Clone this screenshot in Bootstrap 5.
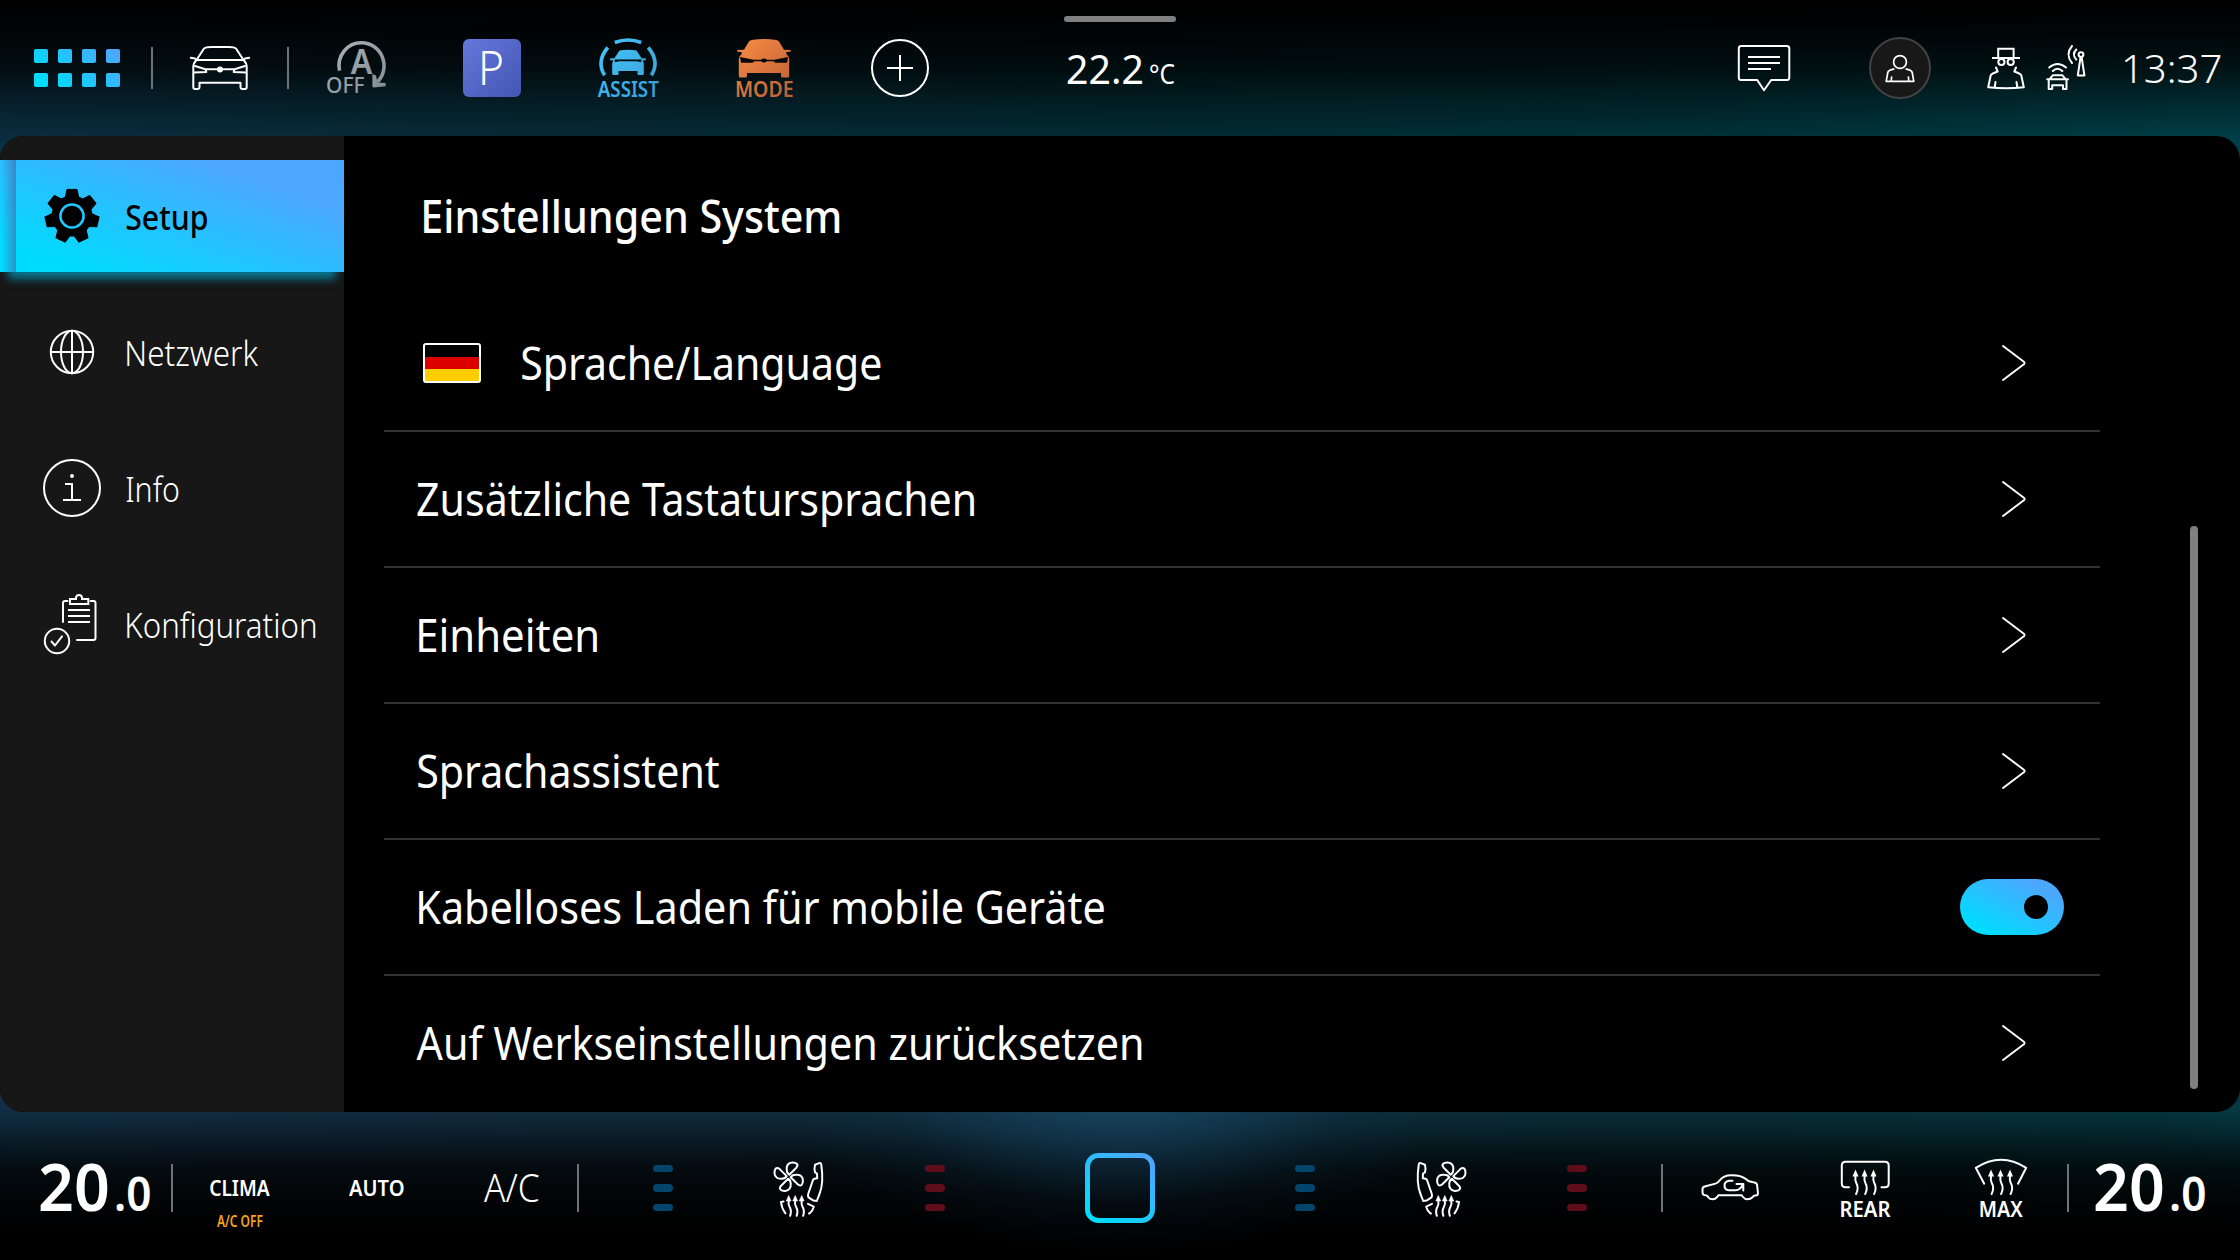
<!DOCTYPE html>
<html lang="de">
<head>
<meta charset="utf-8">
<meta name="viewport" content="width=device-width, initial-scale=1">
<title>Einstellungen System</title>
<link href="https://cdn.jsdelivr.net/npm/bootstrap@5.3.0/dist/css/bootstrap.min.css" rel="stylesheet">
<style>
  :root { --cyan: #00dcff; --sky: #4ca7ff; --line: #333; --bar-line: #6f7375; }
  body {
    width: 2240px; height: 1260px; overflow: hidden; color: #fff;
    font-family: "Noto Sans", "Open Sans", sans-serif; font-variant-ligatures: none;
    background-color: #000;
    background-repeat: no-repeat;
    background-image:
      linear-gradient(180deg, #000 0, rgba(0,0,0,.93) 30px, rgba(0,0,0,.74) 68px, rgba(0,0,0,.42) 100px, rgba(0,0,0,.12) 136px, transparent 160px),
      linear-gradient(90deg, #0b3347 0, #072f3c 560px, #023139 1200px, #00373f 1700px, #01454f 2240px),
      radial-gradient(ellipse 330px 165px at 1120px 8px, rgba(30,88,122,.6) 0, rgba(26,78,112,.42) 35%, rgba(20,60,90,.15) 70%, transparent 100%),
      linear-gradient(180deg, transparent 0, rgba(0,0,0,.1) 32px, rgba(0,0,0,.3) 50px, rgba(0,0,0,.55) 68px, rgba(0,0,0,.78) 90px, rgba(0,0,0,.91) 115px, #000 150px),
      linear-gradient(90deg, #13324a 0, #132f42 560px, #0f3040 1200px, #0a313c 1700px, #063842 2160px, #073d49 2240px);
    background-size: 100% 170px, 100% 170px, 100% 180px, 100% 180px, 100% 180px;
    background-position: 0 0, 0 0, 0 1080px, 0 1080px, 0 1080px;
  }
  .fit { display: inline-block; white-space: pre; transform-origin: 0 50%; line-height: 1.2; }
  svg { display: block; overflow: visible; flex: none; }
  .ln { fill: none; stroke: #fff; stroke-width: 2; stroke-linecap: round; stroke-linejoin: round; }
  .topbar { height: 136px; }
  .slot { width: 136px; height: 100%; display: flex; align-items: center; justify-content: center; flex: none; }
  .slot-apps { width: 152px; justify-content: flex-start; padding-left: 34px; }
  .divider { width: 2px; margin: 0 -1px; background: var(--bar-line); flex: none; }
  .topbar .divider { height: 42px; }
  .handle { width: 112px; height: 6px; border-radius: 3px; background: #808080; top: 16px; left: 1064px; }
  .outside { margin-left: 99px; padding-top: 2px; }
  .t-out { font-size: 40px; } .t-unit { font-size: 28px; margin-left: 8px; }
  .t-clock { font-size: 39px; font-weight: 300; margin: 0 19px 0 20px; padding-top: 1px; }

  .panel { height: 976px; border-radius: 24px; background: #000; }
  .side { width: 344px; background: #171717; padding-top: 24px; flex: none; }
  .side-item { height: 112px; margin-bottom: 24px; padding-left: 40px; font-size: 35px; font-weight: 300; color: #fff; background: none; }
  .side-item .fit { margin-left: 22px; padding-top: 1px; }
  .side-item.current { color: #000; font-weight: 500; background: linear-gradient(19deg, var(--cyan) 12%, var(--sky) 78%); box-shadow: 0 15px 8px -8px rgba(0,180,225,.6); position: relative; }
  .side-item.current::before { content: ""; position: absolute; left: 0; top: 0; width: 16px; height: 100%; background: linear-gradient(90deg, transparent 10%, rgba(70,100,165,.62)); }
  .heading { height: 160px; padding: 0 0 1px 78.5px; font-size: 45px; font-weight: 500; }
  .rows { width: 1716px; margin-left: 40px; }
  .entry { height: 136px; padding: 0 36px 0 33px; font-size: 45px; color: #fff; background: none; border: 0; border-bottom: 2px solid var(--line); border-radius: 0; }
  .entry:last-child { border-bottom-color: transparent; }
  .entry .fit { padding-bottom: 1px; }
  .flag { width: 58px; height: 40px; margin: 0 41px 0 6px; border: 2px solid #fff; border-radius: 3px; background: linear-gradient(#000 33.3%, #d00 33.3% 66.6%, #ffce00 66.6%); }
  .arrow-box { width: 104px; }
  .toggle { width: 104px; height: 56px; border-radius: 28px; padding-right: 16px; background: linear-gradient(27deg, var(--cyan) 15%, var(--sky) 82%); }
  .knob { width: 24px; height: 24px; border-radius: 50%; background: #000; }
  .scroll-thumb { width: 8px; height: 563px; margin: 390px 0 0 90px; border-radius: 4px; background: #808080; }

  .climate { height: 148px; padding-top: 4px; }
  .climate .divider { height: 48px; }
  .temp { width: 172px; padding-bottom: 2px; font-size: 64.5px; font-weight: 600; }
  .temp small { font-size: 46.5px; font-weight: 600; margin-left: 7px; }
  .lbl { font-size: 22.4px; font-weight: 600; line-height: 24px; }
  .lbl-ac { font-size: 38px; font-weight: 300; padding-bottom: 1px; }
  .lbl-off { font-size: 16.4px; font-weight: 600; line-height: 20px; color: #f6a31c; margin-top: 11px; }
  .seat-group { width: 408px; }
  .level { width: 20px; height: 7.5px; border-radius: 4px; background: #04456c; }
  .level + .level { margin-top: 12px; }
  .warm .level { background: #5f0c1b; }
</style>
<script src="https://cdn.jsdelivr.net/npm/bootstrap@5.3.0/dist/js/bootstrap.bundle.min.js"></script>
</head>
<body>
<svg width="0" height="0" class="position-absolute">
  <defs>
    <linearGradient id="gApps" gradientUnits="userSpaceOnUse" x1="20" y1="40" x2="66" y2="-12"><stop offset="0" stop-color="#00dcff"/><stop offset="1" stop-color="#4ca7ff"/></linearGradient>
    <linearGradient id="gPark" x1="0" y1="0" x2="1" y2="1"><stop offset="0" stop-color="#6778dc"/><stop offset="1" stop-color="#4155b2"/></linearGradient>
    <linearGradient id="gAssist" gradientUnits="userSpaceOnUse" x1="10" y1="10" x2="62" y2="62"><stop offset="0" stop-color="#46c4fa"/><stop offset="1" stop-color="#3a9fd6"/></linearGradient>
    <linearGradient id="gMode" gradientUnits="userSpaceOnUse" x1="14" y1="8" x2="62" y2="60"><stop offset="0" stop-color="#f58a42"/><stop offset="1" stop-color="#bf6038"/></linearGradient>
    <linearGradient id="gStop" gradientUnits="userSpaceOnUse" x1="10" y1="10" x2="62" y2="62"><stop offset="0" stop-color="#a9b3ba"/><stop offset="1" stop-color="#858d94"/></linearGradient>
    <linearGradient id="gHome" x1="0.15" y1="1" x2="0.85" y2="0"><stop offset="0" stop-color="#00dcff"/><stop offset="1" stop-color="#4ca7ff"/></linearGradient>
    <g id="heat"><path d="M0 0 L3 7 H-3 Z" fill="#fff" stroke="none"/><path class="ln" d="M0 6 C-.6 10 -.4 11 .8 13.500 C3 17.500 3 20 .6 24.500"/></g>
    <g id="heatS"><path d="M0 0 L2.400 5.500 H-2.400 Z" fill="#fff" stroke="#fff" stroke-width=".6"/><path class="ln" d="M0 5 C-.8 9 0 10 1.200 12 C2.800 15 2.600 17 1.400 20.300"/></g>
    <path id="petal" class="ln" d="M.6 -2 L7.600 -9 C10.500 -12.500 7.500 -14.300 3.500 -14.200 C-1 -14 -2.300 -10.500 -2 -7 C-1.900 -4.500 -1 -3 .6 -2 Z"/>
    <g id="seat">
      <g transform="translate(25.700 24.700)"><use href="#petal"/><use href="#petal" transform="rotate(90)"/><use href="#petal" transform="rotate(180)"/><use href="#petal" transform="rotate(270)"/></g>
      <path class="ln" d="M52 12.700 L57 10.900 Q58.200 11 58.300 13 Q61 31 56.500 42 L53.800 49 L50.500 48.600 L45.500 45.400 Q44.600 44 45.200 42 L50 28 Q50.500 26.500 54.200 26.200 L54 21.500 L52 20.300 Q51 17 52 12.700 Z"/>
      <use href="#heatS" x="25.700" y="43.500"/><use href="#heatS" x="32.200" y="43.500"/><use href="#heatS" x="38.700" y="43.500"/>
      <path class="ln" d="M20.500 49.500 L18 50 Q18.500 56 22.500 61.500 M45 51.800 L50.800 54.600 Q50 58.500 46.500 61.500 H46"/>
    </g>
  </defs>
</svg>

<header class="topbar d-flex align-items-center position-relative">
  <div class="handle position-absolute"></div>
  <div class="slot slot-apps">
    <svg width="86" height="38">
      <g fill="url(#gApps)"><path d="M1.800 0H12.200A1.800 1.800 0 0 1 14 1.800V12.200A1.800 1.800 0 0 1 12.200 14H1.800A1.800 1.800 0 0 1 0 12.200V1.800A1.800 1.800 0 0 1 1.800 0Z
        m24 0h10.400a1.800 1.800 0 0 1 1.800 1.800v10.400a1.800 1.800 0 0 1 -1.800 1.800h-10.400a1.800 1.800 0 0 1 -1.800 -1.800v-10.400a1.800 1.800 0 0 1 1.800 -1.800Z
        m24 0h10.400a1.800 1.800 0 0 1 1.800 1.800v10.400a1.800 1.800 0 0 1 -1.800 1.800h-10.400a1.800 1.800 0 0 1 -1.800 -1.800v-10.400a1.800 1.800 0 0 1 1.800 -1.800Z
        m24 0h10.400a1.800 1.800 0 0 1 1.800 1.800v10.400a1.800 1.800 0 0 1 -1.800 1.800h-10.400a1.800 1.800 0 0 1 -1.800 -1.800v-10.400a1.800 1.800 0 0 1 1.800 -1.800Z
        m-72 24h10.400a1.800 1.800 0 0 1 1.800 1.800v10.400a1.800 1.800 0 0 1 -1.800 1.800h-10.400a1.800 1.800 0 0 1 -1.800 -1.800v-10.400a1.800 1.800 0 0 1 1.800 -1.800Z
        m24 0h10.400a1.800 1.800 0 0 1 1.800 1.800v10.400a1.800 1.800 0 0 1 -1.800 1.800h-10.400a1.800 1.800 0 0 1 -1.800 -1.800v-10.400a1.800 1.800 0 0 1 1.800 -1.800Z
        m24 0h10.400a1.800 1.800 0 0 1 1.800 1.800v10.400a1.800 1.800 0 0 1 -1.800 1.800h-10.400a1.800 1.800 0 0 1 -1.800 -1.800v-10.400a1.800 1.800 0 0 1 1.800 -1.800Z
        m24 0h10.400a1.800 1.800 0 0 1 1.800 1.800v10.400a1.800 1.800 0 0 1 -1.800 1.800h-10.400a1.800 1.800 0 0 1 -1.800 -1.800v-10.400a1.800 1.800 0 0 1 1.800 -1.800Z"/></g>
    </svg>
  </div>
  <div class="divider"></div>
  <div class="slot">
    <svg width="72" height="72" class="ln">
      <path d="M12.500 28 L20 16.500 Q21.200 14.900 28 14.900 H44 Q50.800 14.900 52 16.500 L59.500 28 Z"/>
      <path d="M12.500 28 Q9.300 31 9.300 35 V55 Q9.300 57 11 57 H13.500 Q15.500 57 15.500 55 V50.800 H56.500 V55 Q56.500 57 58.500 57 H61 Q62.700 57 62.700 55 V35 Q62.700 31 59.500 28"/>
      <path d="M12 28 L11 26.400 L6.800 25.800 M60 28 L61 26.400 L65.200 25.800 M11 34 L21.500 37.200 H50.500 L61 34 M21.500 37.200 L22.300 40 L10 40.500 M50.500 37.200 L49.700 40 L62 40.500"/>
      <circle cx="36" cy="37.400" r="2" fill="#fff"/>
    </svg>
  </div>
  <div class="divider"></div>
  <div class="slot">
    <svg width="72" height="72" fill="url(#gStop)">
      <path d="M19.500 38.600 A22 23 0 0 1 41.400 10.800 A22.500 23 0 0 1 57.500 50" fill="none" stroke="url(#gStop)" stroke-width="3.600"/>
      <path d="M52.400 42 L56 43.500 L57.500 50.500 L65.600 51 L65.600 54.200 L54 55.500 Q52.400 55.500 52.400 54 Z"/>
      <text x="30.800" y="42" font-size="33.500" font-weight="600" textLength="21.500" lengthAdjust="spacingAndGlyphs">A</text>
      <text x="6" y="60.700" font-size="21.500" font-weight="500" textLength="38.500" lengthAdjust="spacingAndGlyphs">OFF</text>
    </svg>
  </div>
  <div class="slot">
    <svg width="72" height="72">
      <rect x="7" y="7" width="58" height="58" rx="6" fill="url(#gPark)"/>
      <text x="22" y="53" font-size="47" font-weight="300" fill="#fff" textLength="26" lengthAdjust="spacingAndGlyphs">P</text>
    </svg>
  </div>
  <div class="slot">
    <svg width="72" height="72" fill="url(#gAssist)">
      <path d="M22.800 10.500 Q36 5.500 49.200 10.500 M15.800 15.500 Q4 29.500 12.600 43.300 M56.200 15.500 Q68 29.500 59.400 43.300" fill="none" stroke="url(#gAssist)" stroke-width="3.600"/>
      <path d="M27.500 18.600 Q36 17 44.500 18.600 L49.600 26.200 L54 26.600 L53.700 28.200 L50.600 28.600 Q51.800 30.500 51.800 33 V42 Q51.800 43 50.500 43 H46.500 Q45.500 43 45.500 42 V39 H26.500 V42 Q26.500 43 25.500 43 H21.500 Q20.200 43 20.200 42 V33 Q20.200 30.500 21.400 28.600 L18.300 28.200 L18 26.600 L22.400 26.200 Z"/>
      <path d="M22.500 27.500 H49.500 L49 30.300 L45 29.300 H27 L23 30.300 Z" fill="#02090d"/>
      <text x="5.800" y="65" font-size="22.400" font-weight="600" textLength="61" lengthAdjust="spacingAndGlyphs">ASSIST</text>
    </svg>
  </div>
  <div class="slot">
    <svg width="72" height="72" fill="url(#gMode)">
      <path d="M23.500 8 Q36 6 48.500 8 Q51 8.500 52 11 L56 17.800 L63 18 L62.500 19.800 L58.500 20 L58.200 22 Q61.200 24 61.200 28 V44 Q61.200 45.500 59.700 45.500 H54.500 Q53 45.500 53 44 V41 H19 V44 Q19 45.500 17.500 45.500 H12.300 Q10.800 45.500 10.800 44 V28 Q10.800 24 13.800 22 L13.500 20 L9.500 19.800 L9 18 L16 17.800 L20 11 Q21 8.500 23.500 8 Z"/>
      <path d="M12 25 L25.500 27.800 H33 Q36 25 39 27.800 H46.500 L60 25 L59 30.800 L47.500 30.800 L45.500 29.200 H39 Q36 32 33 29.200 H26.500 L24.500 30.800 L13 30.800 Z" fill="#05080a"/>
      <text x="7" y="65" font-size="22.400" font-weight="600" textLength="58.500" lengthAdjust="spacingAndGlyphs">MODE</text>
    </svg>
  </div>
  <div class="slot">
    <svg width="72" height="72" class="ln"><circle cx="36" cy="36" r="28"/><path stroke-linecap="butt" d="M23 36 H49 M36 23 V49"/></svg>
  </div>
  <div class="outside d-flex align-items-baseline"><span class="fit t-out" data-w="75">22.2</span><span class="fit t-unit" data-w="24.500">°C</span></div>

  <div class="d-flex align-items-center ms-auto h-100">
    <div class="slot">
      <svg width="72" height="72" class="ln"><path d="M13 14 H59 Q61.300 14 61.300 16.500 V45.500 Q61.300 48 59 48 H43.200 L36 58.300 L29.200 48 H13 Q10.800 48 10.800 45.500 V16.500 Q10.800 14 13 14 Z"/><path stroke-linecap="butt" d="M20 25 H52 M20 31 H52 M20 37 H43"/></svg>
    </div>
    <div class="slot">
      <svg width="72" height="72"><circle cx="36" cy="36" r="30" fill="#181818" stroke="#424242" stroke-width="2"/>
        <g class="ln" style="stroke-width:1.7px"><circle cx="36" cy="30" r="6.400"/><path d="M29.800 37.200 Q24.500 38 23.800 40.500 L22.200 49.300 H49.800 L48.200 40.500 Q47.500 38 42.200 37.200 M27.600 45 L27.200 49 M44.400 45 L44.800 49"/></g></svg>
    </div>
    <div class="slot">
      <svg width="136" height="72" class="ln">
        <path stroke-linejoin="miter" stroke-linecap="butt" d="M30.200 26 V16.700 H45.600 V26 M24 26 H52"/>
        <circle cx="33.400" cy="30" r="3.100"/><circle cx="42.700" cy="30" r="3.100"/>
        <path d="M28 35.500 L29.700 39.500 Q24 41.500 22.800 43 L20.200 55.300 Q38 57.400 55.800 55.300 L53.200 43 Q52 41.500 46.300 39.500 L48 35.500 M27.500 50 L26.700 55.500 M48.500 50 L49.300 55.500"/>
        <g transform="translate(62 0)">
          <circle cx="51" cy="22.600" r="2.400"/><path d="M50.500 25.500 L47.800 43.400 H54.400 L51.700 25.500 M42 14 Q35 22.500 42 31 M46.300 17.500 Q41.500 22.500 46.300 27.600"/>
          <path d="M19.200 35.500 Q27.500 28.500 36 35.500 M22.800 39 Q27.500 34.500 32.300 39"/>
          <path d="M19.800 46.800 L23 43.200 H32.200 L35.400 46.800 M17.200 47.300 H38 M18.700 48 V57 H22.200 V53.200 H33 V57 H36.500 V48"/>
        </g>
      </svg>
    </div>
    <span class="fit t-clock" data-w="97">13:37</span>
  </div>
</header>

<div class="panel d-flex overflow-hidden">
  <nav class="side">
    <div class="side-item current d-flex align-items-center">
      <svg width="64" height="64" viewBox="-32 -32 64 64"><defs><path id="tooth" d="M-7 -17 L-5 -26.600 H5 L7 -17 Z" stroke="#000" stroke-linejoin="round"/></defs>
        <circle r="20.500"/><use href="#tooth"/><use href="#tooth" transform="rotate(51.430)"/><use href="#tooth" transform="rotate(102.860)"/><use href="#tooth" transform="rotate(154.290)"/><use href="#tooth" transform="rotate(205.710)"/><use href="#tooth" transform="rotate(257.140)"/><use href="#tooth" transform="rotate(308.570)"/>
        <circle r="11.600" fill="none" stroke="#1fc9ff" stroke-width="2.500"/></svg>
      <span class="fit" data-w="81">Setup</span>
    </div>
    <div class="side-item d-flex align-items-center">
      <svg width="64" height="64" viewBox="-32 -32 64 64" class="ln"><circle r="21.200"/><ellipse rx="11" ry="21.200"/><path d="M-21 0 H21 M0 -21 V21"/></svg>
      <span class="fit" data-w="131.500" data-dx="1">Netzwerk</span>
    </div>
    <div class="side-item d-flex align-items-center">
      <svg width="64" height="64" viewBox="-32 -32 64 64" class="ln"><circle r="28"/><circle cy="-12" r="1.200" fill="#fff" stroke-width="1.500"/><path stroke-linecap="butt" stroke-linejoin="miter" d="M-7 -4 H0 V12 M-9 12 H9"/></svg>
      <span class="fit" data-w="52.500">Info</span>
    </div>
    <div class="side-item d-flex align-items-center">
      <svg width="64" height="64" viewBox="-32 -32 64 64" class="ln"><path d="M-9 -2 V-21 Q-9 -23 -7 -23 H-4.500 M18.500 -23 H21.500 Q23.500 -23 23.500 -21 V14 Q23.500 16 21.500 16 H5"/><path stroke-linejoin="miter" d="M-2 -25 H4 V-26.500 Q4.500 -29 7 -29 Q9.500 -29 10 -26.500 V-25 H16.300 V-20 H-2 Z"/><path stroke-linecap="butt" d="M-4 -14 H18 M-4 -8 H18 M-4 -2 H18"/><circle cx="-15" cy="17" r="12.200"/><path d="M-20.500 17.500 L-17 21.500 L-10 12.300"/></svg>
      <span class="fit" data-w="188" data-dx="1">Konfiguration</span>
    </div>
  </nav>
  <main class="d-flex flex-column">
    <div class="heading d-flex align-items-center"><span class="fit" data-w="416" data-dx="1">Einstellungen System</span></div>
    <div class="rows" id="rows"></div>
  </main>
  <div class="scroll-thumb"></div>
</div>

<footer class="climate d-flex align-items-center">
  <div class="temp d-flex align-items-baseline" style="padding-left:41px"><span class="fit" data-w="68" data-dx="-1">20</span><small class="fit" data-w="34">.0</small></div>
  <div class="divider"></div>
  <div class="slot flex-column" style="padding-top:31px"><span class="fit lbl" data-w="60.500">CLIMA</span><span class="fit lbl-off" data-w="46">A/C OFF</span></div>
  <div class="slot"><span class="fit lbl" data-w="55">AUTO</span></div>
  <div class="slot" style="width:134px"><span class="fit lbl-ac" data-w="55">A/C</span></div>
  <div class="divider"></div>
  <div class="seat-group d-flex align-items-center h-100" style="margin-left:17px">
    <div class="slot flex-column"><i class="level"></i><i class="level"></i><i class="level"></i></div>
    <div class="slot"><svg width="72" height="72"><use href="#seat"/></svg></div>
    <div class="slot warm flex-column"><i class="level"></i><i class="level"></i><i class="level"></i></div>
  </div>
  <div class="slot" style="width:234px"><svg width="70" height="70"><rect x="2.500" y="2.500" width="65" height="65" rx="11" fill="none" stroke="url(#gHome)" stroke-width="5"/></svg></div>
  <div class="seat-group d-flex align-items-center h-100" style="margin-right:17px">
    <div class="slot flex-column"><i class="level"></i><i class="level"></i><i class="level"></i></div>
    <div class="slot"><svg width="72" height="72"><use href="#seat" transform="matrix(-1 0 0 1 72 0)"/></svg></div>
    <div class="slot warm flex-column"><i class="level"></i><i class="level"></i><i class="level"></i></div>
  </div>
  <div class="divider"></div>
  <div class="slot" style="width:135px">
    <svg width="72" height="72" class="ln"><path d="M8.500 37 Q8.500 35 11.500 34.300 L21.500 31.600 Q24 31 25.500 28.500 Q29.500 23.200 37 23.200 Q47 23 51.500 26.800 Q54 29.500 58 30 Q62.500 30.500 63 32.500 L64 41 Q64 43.500 61.500 43.500 Q59.500 43.500 58.500 45.200 Q56.500 47.300 53.500 47.300 Q50.800 47.300 49 45 L47.600 43.200 H24.500 L23 45.200 Q21.500 47.300 18.500 47.300 Q15.800 47.300 14.500 45.500 Q13.500 43.300 11.500 43.300 Q8.700 43.300 8.500 40.500 Z"/><path d="M38.500 28.700 H35 Q30.500 29.500 30.500 33.500 Q30.500 38.200 35 38.200 H41.500 Q46.500 38.200 48.600 32.500 M42.500 32 H49.300 V38.500"/></svg>
  </div>
  <div class="slot">
    <svg width="72" height="72"><path class="ln" d="M20 35.200 H16.500 Q12.800 35.200 12.800 31.500 V13.500 Q12.800 9.800 16.500 9.800 H56 Q59.700 9.800 59.700 13.500 V31.500 Q59.700 35.200 56 35.200 H52.500"/>
      <use href="#heat" x="26.500" y="17.500"/><use href="#heat" x="35.600" y="17.500"/><use href="#heat" x="44.500" y="17.500"/>
      <text x="10.500" y="65" font-size="22" font-weight="600" fill="#fff" textLength="51" lengthAdjust="spacingAndGlyphs">REAR</text></svg>
  </div>
  <div class="slot" style="width:135px">
    <svg width="72" height="72"><path class="ln" d="M19.200 31.700 L10.800 15.800 Q36 -.5 61.200 15.800 L53 31.700"/>
      <use href="#heat" x="26" y="17.500"/><use href="#heat" x="35.500" y="17.500"/><use href="#heat" x="45" y="17.500"/>
      <text x="13.800" y="65" font-size="22" font-weight="600" fill="#fff" textLength="44" lengthAdjust="spacingAndGlyphs">MAX</text></svg>
  </div>
  <div class="divider"></div>
  <div class="temp d-flex align-items-baseline" style="padding-left:28px"><span class="fit" data-w="68" data-dx="-1">20</span><small class="fit" data-w="34">.0</small></div>
</footer>

<script>
  // Settings list: label, width of its lettering, nudge to the optical edge, kind of control
  const entries = [
    ['Sprache/Language', 359, 0, 'flag'],
    ['Zusätzliche Tastatursprachen', 557.5, 0],
    ['Einheiten', 178.5, 2],
    ['Sprachassistent', 301.5, 1],
    ['Kabelloses Laden für mobile Geräte', 685.5, 2, 'toggle'],
    ['Auf Werkseinstellungen zurücksetzen', 725.5, -.5]
  ];
  const chevron = '<svg width="24" height="38" class="ln" style="margin-left:3px"><path d="M1 2 L22.200 18 Q23 19 22.200 20 L1 36"/></svg>';
  document.getElementById('rows').innerHTML = entries.map(([label, w, dx, kind]) =>
    `<div class="entry d-flex align-items-center">${kind === 'flag' ? '<span class="flag"></span>' : ''}<span class="fit" data-w="${w}" data-dx="${dx}">${label}</span>` +
    `<div class="arrow-box ms-auto d-flex justify-content-center">${kind === 'toggle' ? '<div class="toggle d-flex align-items-center justify-content-end"><span class="knob"></span></div>' : chevron}</div></div>`).join('');

  // Condense every label so that its lettering fills exactly its design width
  const ctx = document.createElement('canvas').getContext('2d');
  document.querySelectorAll('.fit').forEach(el => {
    const cs = getComputedStyle(el), w = +el.dataset.w, dx = +(el.dataset.dx || 0);
    ctx.font = `${cs.fontWeight} ${cs.fontSize} "Noto Sans"`;
    const m = ctx.measureText(el.textContent);
    const k = w / (m.actualBoundingBoxRight + m.actualBoundingBoxLeft);
    el.style.width = w + 'px';
    el.style.transform = `translateX(${dx}px) scaleX(${k}) translateX(${m.actualBoundingBoxLeft}px)`;
  });
</script>
</body>
</html>
